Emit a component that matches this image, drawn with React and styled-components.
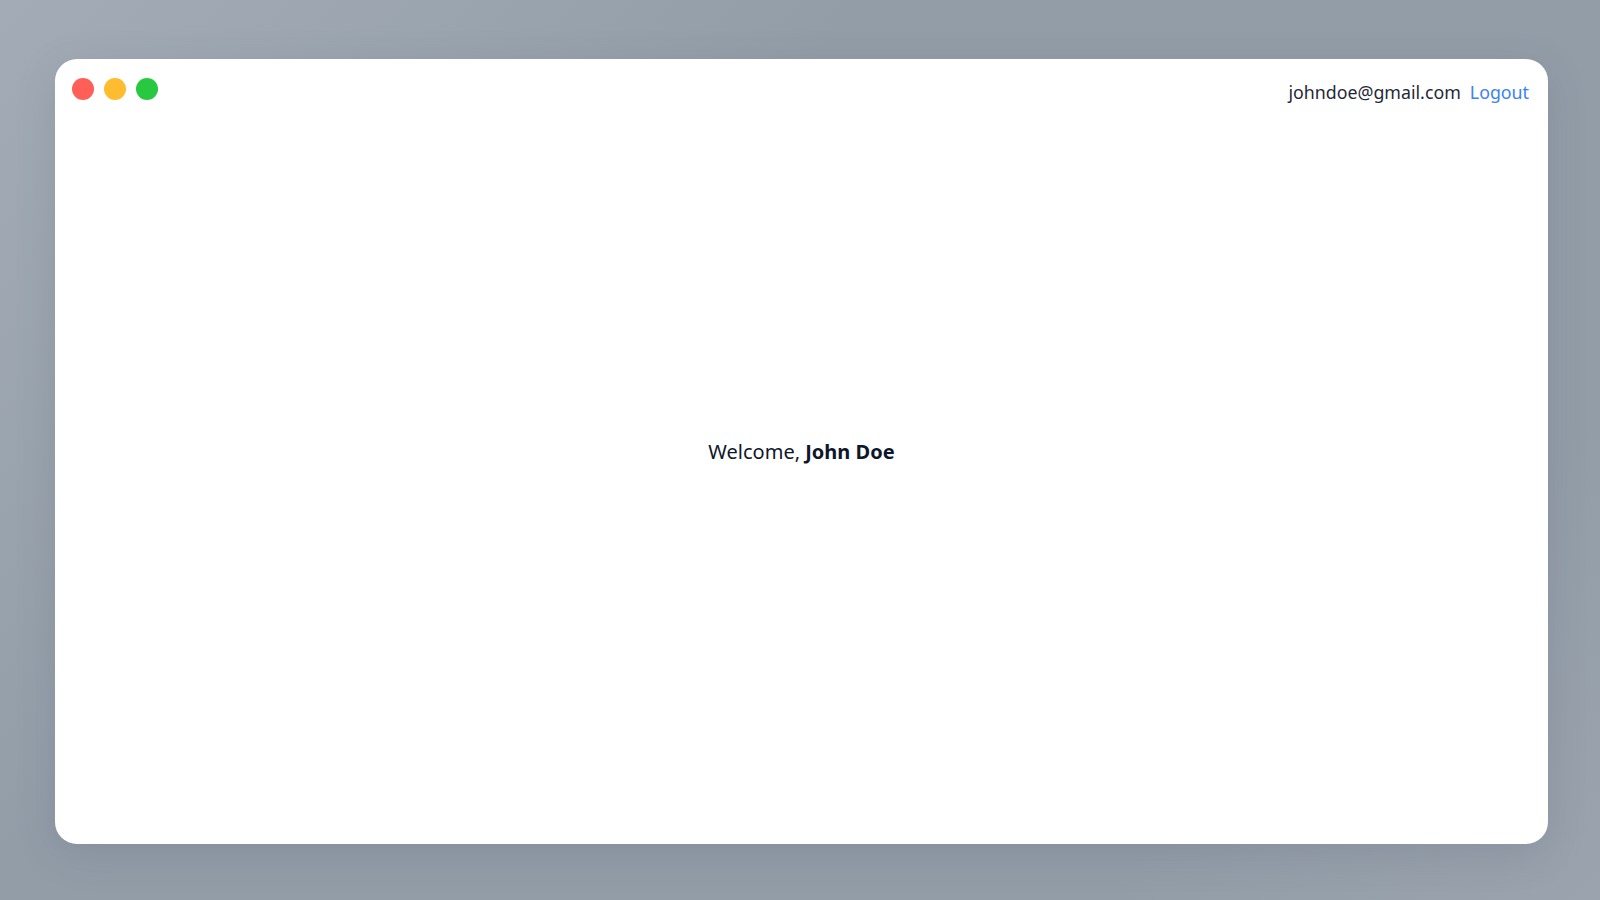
import React from "react";
import styled, { createGlobalStyle } from "styled-components";

const GlobalStyle = createGlobalStyle`
  * {
    box-sizing: border-box;
  }

  html,
  body {
    margin: 0;
    height: 100%;
  }

  body {
    font-family: "Noto Sans", "Open Sans", sans-serif;
    background: linear-gradient(135deg, #a3acb6 0%, #939da8 35%, #939da8 80%, #9aa3ae 100%);
  }

  #root {
    height: 100%;
  }
`;

const Backdrop = styled.div`
  height: 100vh;
  padding: 59px 52px 56px 55px;
  display: flex;
`;

const Window = styled.div`
  flex: 1;
  display: flex;
  flex-direction: column;
  background: #fff;
  border-radius: 22px;
  box-shadow: 0 10px 40px rgba(60, 70, 85, 0.15);
  overflow: hidden;
`;

const Header = styled.header`
  display: flex;
  justify-content: space-between;
  align-items: flex-start;
  padding: 19px 19px 0 17px;
`;

const Dots = styled.div`
  display: flex;
  gap: 10px;
`;

const Dot = styled.span`
  width: 22px;
  height: 22px;
  border-radius: 50%;
  background: ${({ color }) => color};
`;

const User = styled.div`
  display: flex;
  align-items: baseline;
  gap: 9px;
  margin-top: 0;
  font-size: 17.8px;
  line-height: 28px;
`;

const Email = styled.span`
  color: #1f2937;
`;

const Logout = styled.a`
  color: #3b82f6;
  text-decoration: none;
  cursor: pointer;
`;

const Main = styled.main`
  flex: 1;
  display: flex;
  align-items: center;
  justify-content: center;
  padding-bottom: 48px;
  font-size: 20px;
  color: #0f172a;
`;

const App = () => {
  return (
    <>
      <GlobalStyle />
      <Backdrop>
        <Window>
          <Header>
            <Dots>
              <Dot color="#ff5f57" />
              <Dot color="#febc2e" />
              <Dot color="#28c840" />
            </Dots>
            <User>
              <Email>johndoe@gmail.com</Email>
              <Logout>Logout</Logout>
            </User>
          </Header>
          <Main>
            <span>
              Welcome, <b>John Doe</b>
            </span>
          </Main>
        </Window>
      </Backdrop>
    </>
  );
};

export default App;
